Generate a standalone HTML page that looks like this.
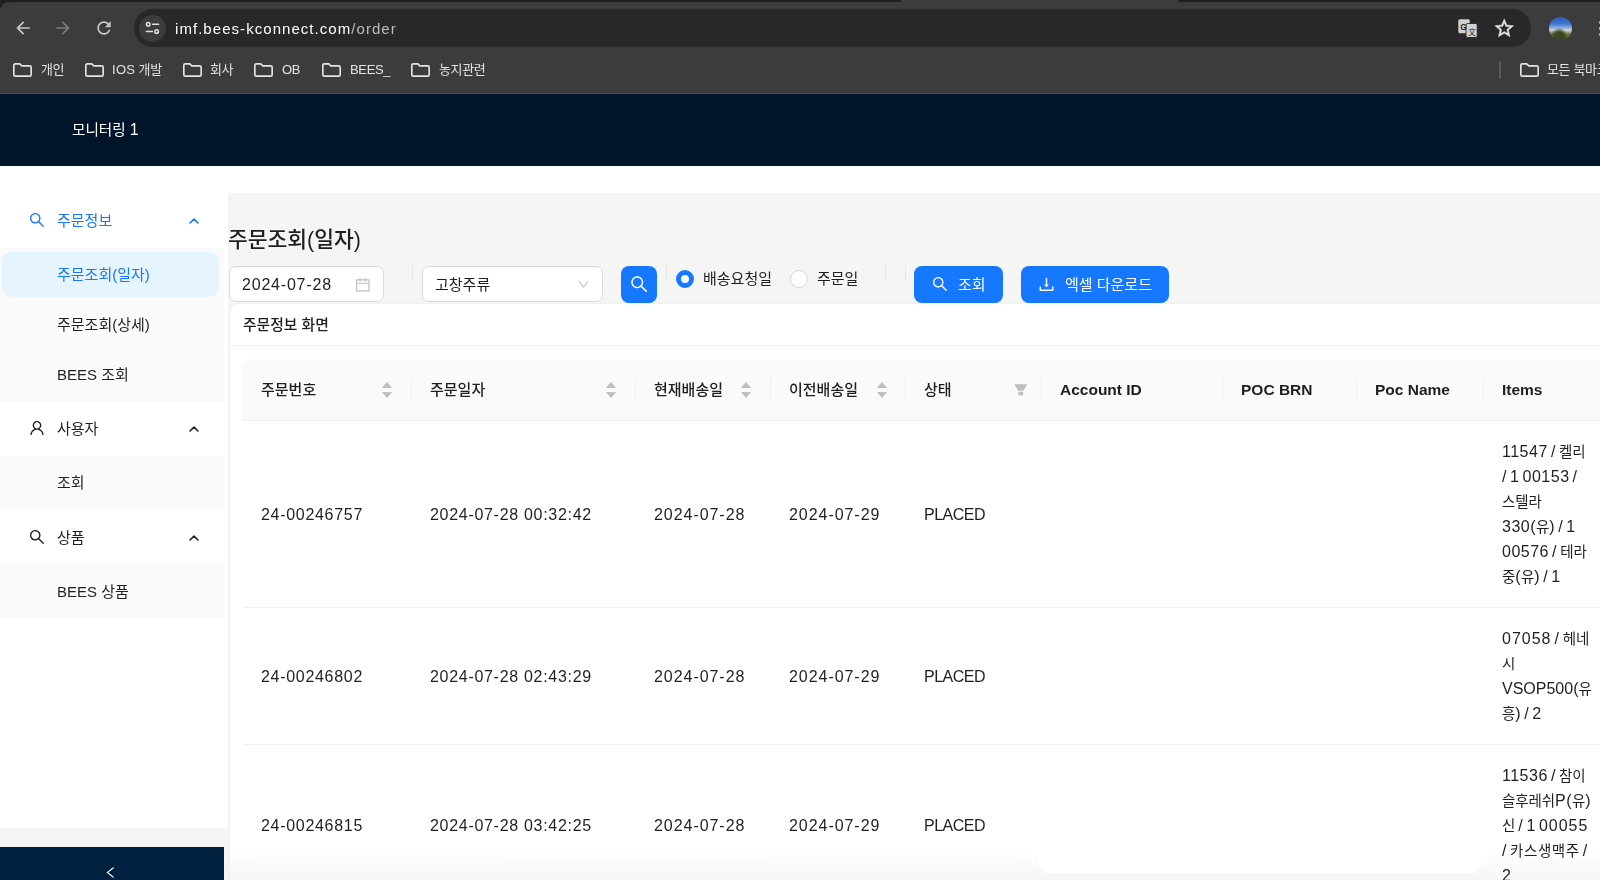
<!DOCTYPE html>
<html lang="ko">
<head>
<meta charset="utf-8">
<title>주문조회(일자)</title>
<style>
*{box-sizing:border-box;margin:0;padding:0}
html,body{width:1600px;height:880px;overflow:hidden;background:#fff}
body{position:relative;font-family:"Liberation Sans","Noto Sans CJK KR",sans-serif;color:#1f1f1f;font-size:16px}
.a{position:absolute;white-space:nowrap}
.t{position:absolute;white-space:nowrap;line-height:20px;height:20px;margin-top:-10px}
svg{position:absolute;overflow:visible}
#tabstrip{left:0;top:0;width:1600px;height:10px;background:#1f1f1f}
#toolbar{left:0;top:2px;width:1600px;height:92px;background:#3c3c3c;border-top-left-radius:9px}
#activetab{left:901px;top:0;width:277px;height:6px;background:#3c3c3c}
#urlbar{left:134px;top:9px;width:1397px;height:38px;border-radius:19px;background:#282828}
#siteinfo{left:139px;top:15px;width:27px;height:27px;border-radius:50%;background:#3c3c3c}
#avatar{left:1548.8px;top:16.9px;width:23.4px;height:23.2px;border-radius:50%;background:radial-gradient(ellipse 38% 42% at 44% 88%,#3a4722 0,#3a4722 55%,rgba(58,71,34,0) 100%),linear-gradient(180deg,#2a5cbd 0%,#3f77d2 30%,#8fb2e2 48%,#d3dbe3 57%,#a9ad9a 64%,#6a7340 76%,#4f5a2c 100%)}
.bm{font-size:13px;letter-spacing:-.35px;color:#e3e3e3}
#chromeline{left:0;top:93px;width:1600px;height:1px;background:#4d4d4d}
#header{left:0;top:94px;width:1600px;height:72px;background:#001529}
#content{left:228.4px;top:193.4px;width:1372px;height:687px;background:#f5f5f5}
#siderfoot{left:0;top:828px;width:228px;height:52px;background:#f5f5f5}
#trigger{left:0;top:847px;width:224px;height:33px;background:#002140}
.subbg{left:0;width:224px;background:#fafafa}
#sel{left:2px;top:252px;width:217px;height:45.3px;border-radius:10px;background:#e6f4ff}
.mi{font-size:15px}
.blue{color:#1677ff}
.box{background:#fff;border:1px solid #d9d9d9;border-radius:7px}
.btn{background:#1677ff;border-radius:8px}
.vd{top:266px;width:1px;height:14px;background:#e6e6e6}
.inp{font-size:16px;letter-spacing:.8px}
#card{left:228.8px;top:302.7px;width:1380px;height:600px;background:#fff;border:1px solid #f0f0f0;border-radius:10px}
.ct{font-size:14.8px}
#thead{left:242px;top:359px;width:1358px;height:62px;background:#fafafa;border-bottom:1px solid #f0f0f0;border-top-left-radius:10px}
.cs{top:377px;width:1px;height:25px;background:#f0f0f0}
.thk{font-size:15px;font-weight:500}
.thl{font-size:15.5px;font-weight:700}
.td{font-size:16px;letter-spacing:.7px}
.items{font-size:16px;line-height:24.9px;letter-spacing:.5px;word-spacing:-1.85px;white-space:nowrap}
.k{font-size:14.5px;letter-spacing:-.1px}
#fade{left:230px;top:853px;width:1370px;height:27px;background:linear-gradient(180deg,rgba(246,246,246,0),rgba(246,246,246,.6) 55%,#f6f6f6)}
#fadehole{left:1037.5px;top:850px;width:444.5px;height:22.5px;background:#fff;border-radius:0 0 12px 12px}
.t,.items{will-change:transform}

</style>
</head>
<body>
<div class="a" id="tabstrip"></div><div class="a" id="toolbar"></div><div class="a" id="activetab"></div><div class="a" id="urlbar"></div><div class="a" id="siteinfo"></div><div class="a" id="chromeline"></div>
<svg style="left:12.7px;top:18.3px" width="20" height="20" viewBox="0 0 24 24"><path fill="#c7c7c7" d="M20 11H7.83l5.59-5.59L12 4l-8 8 8 8 1.41-1.41L7.83 13H20v-2z"/></svg>
<svg style="left:53px;top:18.3px" width="20" height="20" viewBox="0 0 24 24"><path fill="#7b7b7b" d="M4 11h12.17l-5.59-5.59L12 4l8 8-8 8-1.41-1.41L16.17 13H4v-2z"/></svg>
<svg style="left:94.3px;top:18.4px" width="20" height="20" viewBox="0 0 24 24"><path fill="#c7c7c7" d="M17.65 6.35C16.2 4.9 14.21 4 12 4c-4.42 0-7.99 3.58-7.99 8s3.57 8 7.99 8c3.73 0 6.84-2.55 7.73-6h-2.08c-.82 2.33-3.04 4-5.65 4-3.31 0-6-2.69-6-6s2.69-6 6-6c1.66 0 3.14.69 4.22 1.78L13 11h7V4l-2.35 2.35z"/></svg>
<svg style="left:145px;top:21px" width="15" height="14" viewBox="0 0 15 14"><g fill="none" stroke="#e3e3e3" stroke-width="1.5"><circle cx="3.2" cy="3.3" r="1.8"/><path d="M7.6 3.3H13.6" stroke-linecap="round"/><circle cx="11.6" cy="10.5" r="1.8"/><path d="M1.4 10.5H7.4" stroke-linecap="round"/></g></svg>
<div class="t url" style="left:175px;top:28.5px;font-size:15px;letter-spacing:1.05px;color:#fff">imf.bees-kconnect.com<span style="color:#bdbdbd">/order</span></div>
<svg style="left:1458px;top:18.5px" width="20" height="19" viewBox="0 0 20 19"><rect x=".3" y=".3" width="11.5" height="14" rx="1.5" fill="#d0d0d0"/><rect x="8" y="4.5" width="11.2" height="14" rx="1.5" fill="#d0d0d0" stroke="#282828" stroke-width=".9"/><text x="2.3" y="10.6" font-size="8.5" font-weight="700" fill="#282828" font-family="Liberation Sans,sans-serif">G</text><text x="10.2" y="15.6" font-size="7.5" fill="#282828" font-family="Noto Sans CJK KR,sans-serif">文</text></svg>
<svg style="left:1492.5px;top:16.7px" width="22.5" height="22.5" viewBox="0 0 24 24"><path fill="#e3e3e3" stroke="#e3e3e3" stroke-width=".5" d="M22 9.24l-7.19-.62L12 2 9.19 8.63 2 9.24l5.46 4.73L5.82 21 12 17.27 18.18 21l-1.63-7.03L22 9.24zM12 15.4l-3.76 2.27 1-4.28-3.32-2.88 4.38-.38L12 6.1l1.71 4.04 4.38.38-3.32 2.88 1 4.28L12 15.4z"/></svg>
<div class="a" id="avatar"></div>
<div class="a" style="left:1598.5px;top:21px;width:3px;height:3px;border-radius:50%;background:#c7c7c7"></div><div class="a" style="left:1598.5px;top:27px;width:3px;height:3px;border-radius:50%;background:#c7c7c7"></div><div class="a" style="left:1598.5px;top:33px;width:3px;height:3px;border-radius:50%;background:#c7c7c7"></div>
<svg style="left:13px;top:63.2px" width="19" height="14" viewBox="0 0 18.5 13.5"><path d="M2.2 .8H6.6L8.6 2.8H16.3Q17.7 2.8 17.7 4.2V11.3Q17.7 12.7 16.3 12.7H2.2Q.8 12.7 .8 11.3V2.2Q.8 .8 2.2 .8Z" fill="none" stroke="#e3e3e3" stroke-width="1.6" stroke-linejoin="round"/></svg>
<div class="t bm" style="left:40.5px;top:70px;">개인</div>
<svg style="left:85px;top:63.2px" width="19" height="14" viewBox="0 0 18.5 13.5"><path d="M2.2 .8H6.6L8.6 2.8H16.3Q17.7 2.8 17.7 4.2V11.3Q17.7 12.7 16.3 12.7H2.2Q.8 12.7 .8 11.3V2.2Q.8 .8 2.2 .8Z" fill="none" stroke="#e3e3e3" stroke-width="1.6" stroke-linejoin="round"/></svg>
<div class="t bm" style="left:112px;top:70px;"><span style="letter-spacing:.3px">IOS</span> 개발</div>
<svg style="left:183px;top:63.2px" width="19" height="14" viewBox="0 0 18.5 13.5"><path d="M2.2 .8H6.6L8.6 2.8H16.3Q17.7 2.8 17.7 4.2V11.3Q17.7 12.7 16.3 12.7H2.2Q.8 12.7 .8 11.3V2.2Q.8 .8 2.2 .8Z" fill="none" stroke="#e3e3e3" stroke-width="1.6" stroke-linejoin="round"/></svg>
<div class="t bm" style="left:210px;top:70px;">회사</div>
<svg style="left:254px;top:63.2px" width="19" height="14" viewBox="0 0 18.5 13.5"><path d="M2.2 .8H6.6L8.6 2.8H16.3Q17.7 2.8 17.7 4.2V11.3Q17.7 12.7 16.3 12.7H2.2Q.8 12.7 .8 11.3V2.2Q.8 .8 2.2 .8Z" fill="none" stroke="#e3e3e3" stroke-width="1.6" stroke-linejoin="round"/></svg>
<div class="t bm" style="left:281.5px;top:70px;">OB</div>
<svg style="left:321.5px;top:63.2px" width="19" height="14" viewBox="0 0 18.5 13.5"><path d="M2.2 .8H6.6L8.6 2.8H16.3Q17.7 2.8 17.7 4.2V11.3Q17.7 12.7 16.3 12.7H2.2Q.8 12.7 .8 11.3V2.2Q.8 .8 2.2 .8Z" fill="none" stroke="#e3e3e3" stroke-width="1.6" stroke-linejoin="round"/></svg>
<div class="t bm" style="left:349.5px;top:70px;">BEES_</div>
<svg style="left:411px;top:63.2px" width="19" height="14" viewBox="0 0 18.5 13.5"><path d="M2.2 .8H6.6L8.6 2.8H16.3Q17.7 2.8 17.7 4.2V11.3Q17.7 12.7 16.3 12.7H2.2Q.8 12.7 .8 11.3V2.2Q.8 .8 2.2 .8Z" fill="none" stroke="#e3e3e3" stroke-width="1.6" stroke-linejoin="round"/></svg>
<div class="t bm" style="left:438.5px;top:70px;">농지관련</div>
<svg style="left:1519.5px;top:63.2px" width="19" height="14" viewBox="0 0 18.5 13.5"><path d="M2.2 .8H6.6L8.6 2.8H16.3Q17.7 2.8 17.7 4.2V11.3Q17.7 12.7 16.3 12.7H2.2Q.8 12.7 .8 11.3V2.2Q.8 .8 2.2 .8Z" fill="none" stroke="#e3e3e3" stroke-width="1.6" stroke-linejoin="round"/></svg>
<div class="t bm" style="left:1547px;top:70px;">모든 북마크</div>
<div class="a" style="left:1499px;top:61px;width:2px;height:18px;border-radius:1px;background:#5a5a5a"></div>
<div class="a" id="header"></div>
<div class="t brand" style="left:72.3px;top:130px;font-size:14.6px;color:#fff">모니터링 <span style="font-size:16px">1</span></div>
<div class="a subbg" style="top:248px;height:154px"></div>
<div class="a subbg" style="top:456px;height:54px"></div>
<div class="a subbg" style="top:564px;height:54px"></div>
<div class="a" id="sel"></div>
<svg style="left:28px;top:211.1px" width="18" height="18" viewBox="0 0 1024 1024"><path fill="#1677ff" d="M909.6 854.5L649.9 594.8C690.2 542.7 712 479 712 412c0-80.200-31.300-155.400-87.900-212.100-56.600-56.700-132-87.900-212.100-87.900s-155.500 31.300-212.100 87.900C143.200 256.500 112 331.800 112 412c0 80.100 31.300 155.500 87.900 212.100C256.500 680.800 331.800 712 412 712c67 0 130.600-21.800 182.700-62l259.700 259.600a8.200 8.200 0 0 0 11.600 0l43.600-43.500a8.200 8.200 0 0 0 0-11.600zM570.400 570.400C528 612.700 471.800 636 412 636s-116-23.300-158.400-65.600C211.300 528 188 471.800 188 412s23.300-116.100 65.600-158.400C296 211.300 352.200 188 412 188s116.100 23.200 158.400 65.600S636 352.200 636 412s-23.300 116.100-65.600 158.400z"/></svg>
<div class="t mi blue" style="left:56.5px;top:220.5px;">주문정보</div>
<svg style="left:188.7px;top:218px" width="10" height="6" viewBox="0 0 10 6"><path d="M1 5L5 1.2L9 5" fill="none" stroke="#1677ff" stroke-width="1.6" stroke-linecap="round" stroke-linejoin="round"/></svg>
<div class="t mi blue" style="left:56.5px;top:274.5px;">주문조회(일자)</div>
<div class="t mi" style="left:56.5px;top:324.5px;">주문조회(상세)</div>
<div class="t mi" style="left:56.5px;top:374.5px;">BEES 조회</div>
<svg style="left:28px;top:419.1px" width="18" height="18" viewBox="0 0 1024 1024"><path fill="#1f1f1f" d="M858.500 763.600a374 374 0 0 0-80.600-119.500 375.630 375.630 0 0 0-119.500-80.600c-.4-.2-.8-.3-1.200-.5C719.500 518 760 444.700 760 362c0-137-111-248-248-248S264 225 264 362c0 82.700 40.500 156 102.800 201.100-.4.200-.8.300-1.200.5-44.800 18.900-85 46-119.500 80.600a375.630 375.630 0 0 0-80.600 119.500A371.700 371.700 0 0 0 136 901.800a8 8 0 0 0 8 8.200h60c4.400 0 7.900-3.500 8-7.800 2-77.200 33-149.500 87.800-204.300 56.700-56.700 132-87.900 212.200-87.900s155.500 31.200 212.200 87.900C779 752.700 810 825 812 902.200c.1 4.400 3.600 7.800 8 7.800h60a8 8 0 0 0 8-8.200c-1-47.800-10.900-94.300-29.500-138.200zM512 534c-45.900 0-89.100-17.900-121.600-50.400S340 407.900 340 362c0-45.900 17.900-89.100 50.400-121.600S466.100 190 512 190s89.100 17.900 121.600 50.400S684 316.100 684 362c0 45.900-17.900 89.100-50.400 121.600S557.900 534 512 534z"/></svg>
<div class="t mi" style="left:56.5px;top:428.5px;">사용자</div>
<svg style="left:188.7px;top:426px" width="10" height="6" viewBox="0 0 10 6"><path d="M1 5L5 1.2L9 5" fill="none" stroke="#1f1f1f" stroke-width="1.6" stroke-linecap="round" stroke-linejoin="round"/></svg>
<div class="t mi" style="left:56.5px;top:482.5px;">조회</div>
<svg style="left:28px;top:528.1px" width="18" height="18" viewBox="0 0 1024 1024"><path fill="#1f1f1f" d="M909.6 854.5L649.9 594.8C690.2 542.7 712 479 712 412c0-80.200-31.300-155.400-87.900-212.100-56.600-56.700-132-87.900-212.100-87.900s-155.500 31.300-212.100 87.900C143.200 256.500 112 331.800 112 412c0 80.100 31.300 155.500 87.900 212.100C256.500 680.800 331.800 712 412 712c67 0 130.600-21.800 182.700-62l259.700 259.600a8.200 8.200 0 0 0 11.600 0l43.600-43.500a8.200 8.200 0 0 0 0-11.600zM570.400 570.400C528 612.700 471.800 636 412 636s-116-23.300-158.400-65.600C211.300 528 188 471.800 188 412s23.300-116.100 65.600-158.400C296 211.300 352.200 188 412 188s116.100 23.200 158.400 65.600S636 352.200 636 412s-23.300 116.100-65.600 158.400z"/></svg>
<div class="t mi" style="left:56.5px;top:537.5px;">상품</div>
<svg style="left:188.7px;top:535px" width="10" height="6" viewBox="0 0 10 6"><path d="M1 5L5 1.2L9 5" fill="none" stroke="#1f1f1f" stroke-width="1.6" stroke-linecap="round" stroke-linejoin="round"/></svg>
<div class="t mi" style="left:56.5px;top:591.5px;">BEES 상품</div>
<div class="a" id="content"></div>
<div class="t h" style="left:228px;top:239.5px;font-size:21.5px;font-weight:500;line-height:30px;height:30px;margin-top:-15px">주문조회(일자)</div>
<div class="a box" style="left:228.6px;top:266.4px;width:155.2px;height:36px"></div>
<div class="t inp" style="left:241.7px;top:285.3px;">2024-07-28</div>
<svg style="left:354.2px;top:275.5px" width="17.5" height="17.5" viewBox="0 0 1024 1024"><path fill="#bfbfbf" d="M880 184H712v-64c0-4.400-3.600-8-8-8h-56c-4.400 0-8 3.600-8 8v64H384v-64c0-4.400-3.600-8-8-8h-56c-4.400 0-8 3.600-8 8v64H144c-17.700 0-32 14.300-32 32v664c0 17.700 14.300 32 32 32h736c17.700 0 32-14.300 32-32V216c0-17.700-14.300-32-32-32zm-40 656H184V460h656v380zM184 392V256h128v48c0 4.400 3.600 8 8 8h56c4.400 0 8-3.600 8-8v-48h256v48c0 4.400 3.600 8 8 8h56c4.400 0 8-3.600 8-8v-48h128v136H184z"/></svg>
<div class="a vd" style="left:412px"></div>
<div class="a vd" style="left:666px"></div>
<div class="a vd" style="left:885px"></div>
<div class="a vd" style="left:904.5px"></div>
<div class="a box" style="left:422px;top:266.3px;width:180.8px;height:36px"></div>
<div class="t mi" style="left:435px;top:284.5px;">고창주류</div>
<svg style="left:576.5px;top:278px" width="13" height="13" viewBox="0 0 1024 1024"><path fill="#bfbfbf" d="M884 256h-75c-5.100 0-9.900 2.500-12.900 6.600L512 654.200 227.900 262.600c-3-4.100-7.800-6.600-12.900-6.600h-75c-6.500 0-10.300 7.400-6.500 12.700l352.600 486.100c12.800 17.600 39 17.600 51.700 0l352.600-486.100c3.900-5.300.1-12.700-6.400-12.700z"/></svg>
<div class="a btn" style="left:621px;top:266px;width:36px;height:36.5px"></div>
<svg style="left:628.8px;top:274.2px" width="20.5" height="20.5" viewBox="0 0 1024 1024"><path fill="#fff" d="M909.6 854.5L649.9 594.8C690.2 542.7 712 479 712 412c0-80.200-31.300-155.400-87.900-212.100-56.600-56.700-132-87.900-212.100-87.900s-155.500 31.300-212.100 87.900C143.200 256.500 112 331.800 112 412c0 80.100 31.300 155.500 87.900 212.100C256.500 680.800 331.800 712 412 712c67 0 130.600-21.800 182.700-62l259.700 259.600a8.200 8.200 0 0 0 11.600 0l43.600-43.500a8.200 8.200 0 0 0 0-11.600zM570.400 570.400C528 612.700 471.800 636 412 636s-116-23.300-158.400-65.600C211.300 528 188 471.800 188 412s23.300-116.100 65.600-158.400C296 211.300 352.200 188 412 188s116.100 23.200 158.400 65.600S636 352.200 636 412s-23.300 116.100-65.600 158.400z"/></svg>
<div class="a" style="left:676px;top:270px;width:18px;height:18px;border-radius:50%;background:#fff;border:5.5px solid #1677ff"></div>
<div class="t mi" style="left:703px;top:278.5px;">배송요청일</div>
<div class="a" style="left:790px;top:270px;width:18px;height:18px;border-radius:50%;background:#fff;border:1px solid #d9d9d9"></div>
<div class="t mi" style="left:816.5px;top:278.5px;">주문일</div>
<div class="a btn" style="left:914px;top:266px;width:89px;height:36.5px"></div>
<svg style="left:930.8px;top:275.3px" width="18" height="18" viewBox="0 0 1024 1024"><path fill="#fff" d="M909.6 854.5L649.9 594.8C690.2 542.7 712 479 712 412c0-80.200-31.300-155.400-87.900-212.100-56.600-56.700-132-87.900-212.100-87.900s-155.500 31.300-212.100 87.900C143.200 256.500 112 331.800 112 412c0 80.100 31.300 155.500 87.900 212.100C256.500 680.800 331.800 712 412 712c67 0 130.600-21.800 182.700-62l259.700 259.600a8.200 8.200 0 0 0 11.600 0l43.600-43.500a8.200 8.200 0 0 0 0-11.600zM570.400 570.400C528 612.700 471.800 636 412 636s-116-23.300-158.400-65.600C211.300 528 188 471.800 188 412s23.300-116.100 65.600-158.400C296 211.300 352.200 188 412 188s116.100 23.200 158.400 65.600S636 352.200 636 412s-23.300 116.100-65.600 158.400z"/></svg>
<div class="t mi" style="left:957.5px;top:284.5px;color:#fff">조회</div>
<div class="a btn" style="left:1021px;top:266px;width:148px;height:36.5px"></div>
<svg style="left:1037.2px;top:274.6px" width="19" height="19" viewBox="0 0 1024 1024"><path fill="#fff" d="M505.700 661a8 8 0 0 0 12.600 0l112-141.700c4.100-5.200.4-12.900-6.300-12.900h-74.100V168c0-4.400-3.600-8-8-8h-60c-4.400 0-8 3.600-8 8v338.300H400c-6.700 0-10.400 7.700-6.300 12.900l112 141.800zM878 626h-60c-4.400 0-8 3.600-8 8v154H214V634c0-4.400-3.600-8-8-8h-60c-4.400 0-8 3.600-8 8v198c0 17.700 14.300 32 32 32h684c17.700 0 32-14.300 32-32V634c0-4.400-3.600-8-8-8z"/></svg>
<div class="t mi" style="left:1064.5px;top:284.5px;color:#fff">엑셀 다운로드</div>
<div class="a" id="card"></div>
<div class="a" id="fade"></div><div class="a" id="fadehole"></div>
<div class="t ct" style="left:242.5px;top:324.5px;font-weight:500">주문정보 화면</div>
<div class="a" style="left:230px;top:345px;width:1370px;height:1px;background:#f0f0f0"></div>
<div class="a" id="thead"></div>
<div class="a cs" style="left:410.5px"></div>
<div class="a cs" style="left:635px"></div>
<div class="a cs" style="left:770px"></div>
<div class="a cs" style="left:905px"></div>
<div class="a cs" style="left:1040.5px"></div>
<div class="a cs" style="left:1221.5px"></div>
<div class="a cs" style="left:1356px"></div>
<div class="a cs" style="left:1483px"></div>
<div class="t thk" style="left:260.5px;top:389.5px;">주문번호</div>
<div class="t thk" style="left:429.5px;top:389.5px;">주문일자</div>
<div class="t thk" style="left:654px;top:389.5px;">현재배송일</div>
<div class="t thk" style="left:789px;top:389.5px;">이전배송일</div>
<div class="t thk" style="left:924px;top:389.5px;">상태</div>
<div class="t thl" style="left:1060px;top:390px;">Account ID</div>
<div class="t thl" style="left:1241px;top:390px;">POC BRN</div>
<div class="t thl" style="left:1375px;top:390px;">Poc Name</div>
<div class="t thl" style="left:1502px;top:390px;">Items</div>
<svg style="left:379.7px;top:378.4px" width="14" height="14" viewBox="0 0 1024 1024"><path fill="#bfbfbf" d="M858.900 689L530.500 308.200c-9.400-10.900-27.500-10.900-37 0L165.100 689c-12.200 14.200-1.200 35 18.500 35h656.800c19.700 0 30.700-20.800 18.500-35z"/></svg>
<svg style="left:379.7px;top:387.8px" width="14" height="14" viewBox="0 0 1024 1024"><path fill="#bfbfbf" d="M840.400 300H183.600c-19.700 0-30.700 20.800-18.500 35l328.400 380.800c9.400 10.900 27.500 10.900 37 0L858.900 335c12.200-14.200 1.200-35-18.500-35z"/></svg>
<svg style="left:604.0px;top:378.4px" width="14" height="14" viewBox="0 0 1024 1024"><path fill="#bfbfbf" d="M858.900 689L530.500 308.200c-9.400-10.900-27.500-10.900-37 0L165.100 689c-12.200 14.200-1.200 35 18.500 35h656.800c19.700 0 30.700-20.800 18.500-35z"/></svg>
<svg style="left:604.0px;top:387.8px" width="14" height="14" viewBox="0 0 1024 1024"><path fill="#bfbfbf" d="M840.400 300H183.600c-19.700 0-30.700 20.800-18.500 35l328.400 380.800c9.400 10.900 27.500 10.900 37 0L858.900 335c12.200-14.200 1.200-35-18.500-35z"/></svg>
<svg style="left:739.2px;top:378.4px" width="14" height="14" viewBox="0 0 1024 1024"><path fill="#bfbfbf" d="M858.900 689L530.500 308.200c-9.400-10.900-27.500-10.900-37 0L165.100 689c-12.200 14.200-1.200 35 18.500 35h656.800c19.700 0 30.700-20.800 18.500-35z"/></svg>
<svg style="left:739.2px;top:387.8px" width="14" height="14" viewBox="0 0 1024 1024"><path fill="#bfbfbf" d="M840.400 300H183.600c-19.700 0-30.700 20.800-18.500 35l328.400 380.800c9.400 10.900 27.500 10.900 37 0L858.900 335c12.200-14.200 1.200-35-18.500-35z"/></svg>
<svg style="left:874.7px;top:378.4px" width="14" height="14" viewBox="0 0 1024 1024"><path fill="#bfbfbf" d="M858.900 689L530.500 308.200c-9.400-10.900-27.500-10.900-37 0L165.100 689c-12.200 14.200-1.200 35 18.500 35h656.800c19.700 0 30.700-20.800 18.500-35z"/></svg>
<svg style="left:874.7px;top:387.8px" width="14" height="14" viewBox="0 0 1024 1024"><path fill="#bfbfbf" d="M840.400 300H183.600c-19.700 0-30.700 20.800-18.500 35l328.400 380.800c9.400 10.900 27.500 10.900 37 0L858.900 335c12.200-14.200 1.200-35-18.500-35z"/></svg>
<svg style="left:1013.2px;top:381.9px" width="15.5" height="15.5" viewBox="0 0 1024 1024"><path fill="#bfbfbf" d="M349 838c0 17.700 14.200 32 31.800 32h262.400c17.600 0 31.800-14.300 31.800-32V642H349v196zm531.100-684H143.900c-24.500 0-39.800 26.700-27.500 48l221.300 376h348.800l221.300-376c12.100-21.300-3.200-48-27.700-48z"/></svg>
<div class="a" style="left:242px;top:607px;width:1358px;height:1px;background:#f0f0f0"></div>
<div class="a" style="left:242px;top:744px;width:1358px;height:1px;background:#f0f0f0"></div>
<div class="t td" style="left:260.5px;top:514.5px;">24-00246757</div>
<div class="t td" style="left:429.5px;top:514.5px;">2024-07-28 00:32:42</div>
<div class="t td" style="left:654px;top:514.5px;letter-spacing:.95px">2024-07-28</div>
<div class="t td" style="left:789px;top:514.5px;letter-spacing:.95px">2024-07-29</div>
<div class="t td" style="left:924px;top:514.5px;letter-spacing:-.5px">PLACED</div>
<div class="t td" style="left:260.5px;top:676.5px;">24-00246802</div>
<div class="t td" style="left:429.5px;top:676.5px;">2024-07-28 02:43:29</div>
<div class="t td" style="left:654px;top:676.5px;letter-spacing:.95px">2024-07-28</div>
<div class="t td" style="left:789px;top:676.5px;letter-spacing:.95px">2024-07-29</div>
<div class="t td" style="left:924px;top:676.5px;letter-spacing:-.5px">PLACED</div>
<div class="t td" style="left:260.5px;top:825.5px;">24-00246815</div>
<div class="t td" style="left:429.5px;top:825.5px;">2024-07-28 03:42:25</div>
<div class="t td" style="left:654px;top:825.5px;letter-spacing:.95px">2024-07-28</div>
<div class="t td" style="left:789px;top:825.5px;letter-spacing:.95px">2024-07-29</div>
<div class="t td" style="left:924px;top:825.5px;letter-spacing:-.5px">PLACED</div>
<div class="a items" style="left:1502px;top:440px">11547 / <span class="k">켈리</span><br>/ 1 00153 /<br><span class="k">스텔라</span><br>330(<span class="k">유</span>) / 1<br>00576 / <span class="k">테라</span><br><span class="k">중</span>(<span class="k">유</span>) / 1</div>
<div class="a items" style="left:1502px;top:627px"><span style="letter-spacing:1px">07058</span> / <span class="k">헤네</span><br><span class="k">시</span><br><span style="letter-spacing:0">VSOP500(</span><span class="k">유</span><br><span class="k">흥</span>) / 2</div>
<div class="a items" style="left:1502px;top:764px">11536 / <span class="k">참이</span><br><span class="k">슬후레쉬</span>P(<span class="k">유</span>)<br><span class="k">신</span> / 1 <span style="letter-spacing:1px">00055</span><br>/ <span class="k" style="letter-spacing:.6px">카스생맥주</span> /<br>2</div>
<div class="a" id="siderfoot"></div><div class="a" id="trigger"></div>
<svg style="left:103px;top:865px" width="15" height="15" viewBox="0 0 1024 1024"><path fill="#fff" d="M724 218.300V141c0-6.700-7.700-10.400-12.900-6.300L260.300 486.800a31.860 31.860 0 0 0 0 50.300l450.800 352.100c5.300 4.100 12.900.4 12.900-6.300v-77.300c0-4.900-2.300-9.600-6.100-12.600l-360-281 360-281.100c3.800-3 6.100-7.700 6.100-12.600z"/></svg>
</body>
</html>
